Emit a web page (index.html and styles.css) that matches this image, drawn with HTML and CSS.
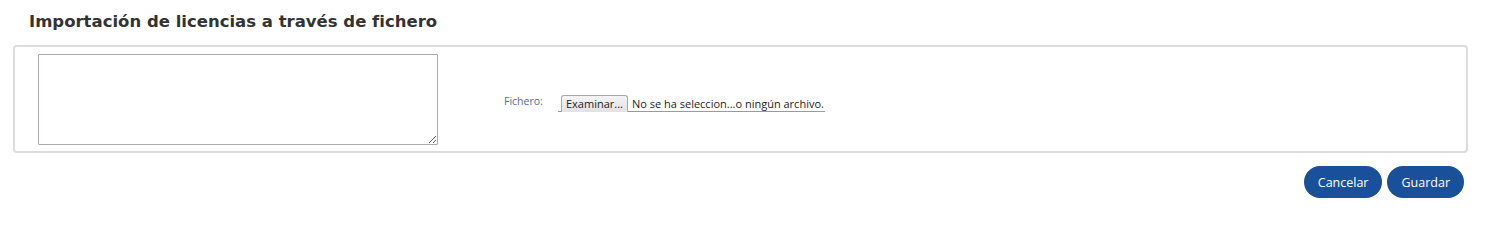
FILE: index.html
```html
<!DOCTYPE html>
<html lang="es">
<head>
<meta charset="utf-8">
<link rel="stylesheet" href="styles.css">
</head>
<body>
<div class="page">
  <h1 class="title">Importación de licencias a través de fichero</h1>
  <div class="panel">
    <textarea class="notes"></textarea>
    <div class="field">
      <label class="label">Fichero:</label>
      <div class="file">
        <span class="file-btn">Examinar...</span>
        <span class="file-name">No se ha seleccion...o ningún archivo.</span>
      </div>
    </div>
  </div>
  <div class="actions">
    <button class="btn">Cancelar</button>
    <button class="btn">Guardar</button>
  </div>
</div>
</body>
</html>
```
FILE: styles.css
```css
html, body { margin: 0; padding: 0; background: #fff; }
.page { padding: 0 32px 0 13px; }
.title {
  margin: 0;
  padding: 12px 0 0 16px;
  height: 45px;
  box-sizing: border-box;
  font-family: "DejaVu Sans", Verdana, sans-serif;
  font-weight: bold;
  font-size: 16.5px;
  line-height: 20px;
  color: #333;
}
.panel {
  box-sizing: border-box;
  height: 108px;
  border: 2px solid #dcdcdc;
  border-radius: 4px;
  display: flex;
  align-items: flex-start;
  padding: 7px 0 0 23px;
}
.notes {
  box-sizing: border-box;
  width: 400px;
  height: 91px;
  margin: 0;
  border: 1px solid #a9a9b2;
  border-radius: 1px;
  background: #fff;
}
.field {
  display: flex;
  align-items: flex-start;
  margin: 40px 0 0 66px;
}
.label {
  width: 54px;
  font-family: "Open Sans", sans-serif;
  font-size: 10.5px;
  line-height: 14px;
  color: #4a6cb3;
}
.file {
  display: flex;
  align-items: center;
  width: 267px;
  border-bottom: 1px solid #9a9a9a;
  padding: 2px 0 0 3px;
  box-sizing: border-box;
  height: 18px;
}
.file-btn {
  box-sizing: border-box;
  height: 17px;
  padding: 0 4px;
  border: 1px solid #a8a8a8;
  border-bottom: none;
  border-radius: 3px 3px 0 0;
  background: linear-gradient(#f4f4f4, #e2e2e2);
  font-family: "Open Sans", sans-serif;
  font-size: 11px;
  line-height: 16px;
  color: #222;
}
.file-name {
  margin-left: 4px;
  font-family: "Open Sans", sans-serif;
  font-size: 11px;
  line-height: 16px;
  color: #222;
}
.actions {
  display: flex;
  justify-content: flex-end;
  gap: 5px;
  padding: 13px 4px 0 0;
}
.btn {
  height: 32px;
  border: none;
  border-radius: 16px;
  background: #1a4f9a;
  color: #fff;
  font-family: "Open Sans", sans-serif;
  font-size: 12.5px;
  padding: 0 14px;
  cursor: pointer;
}
```
